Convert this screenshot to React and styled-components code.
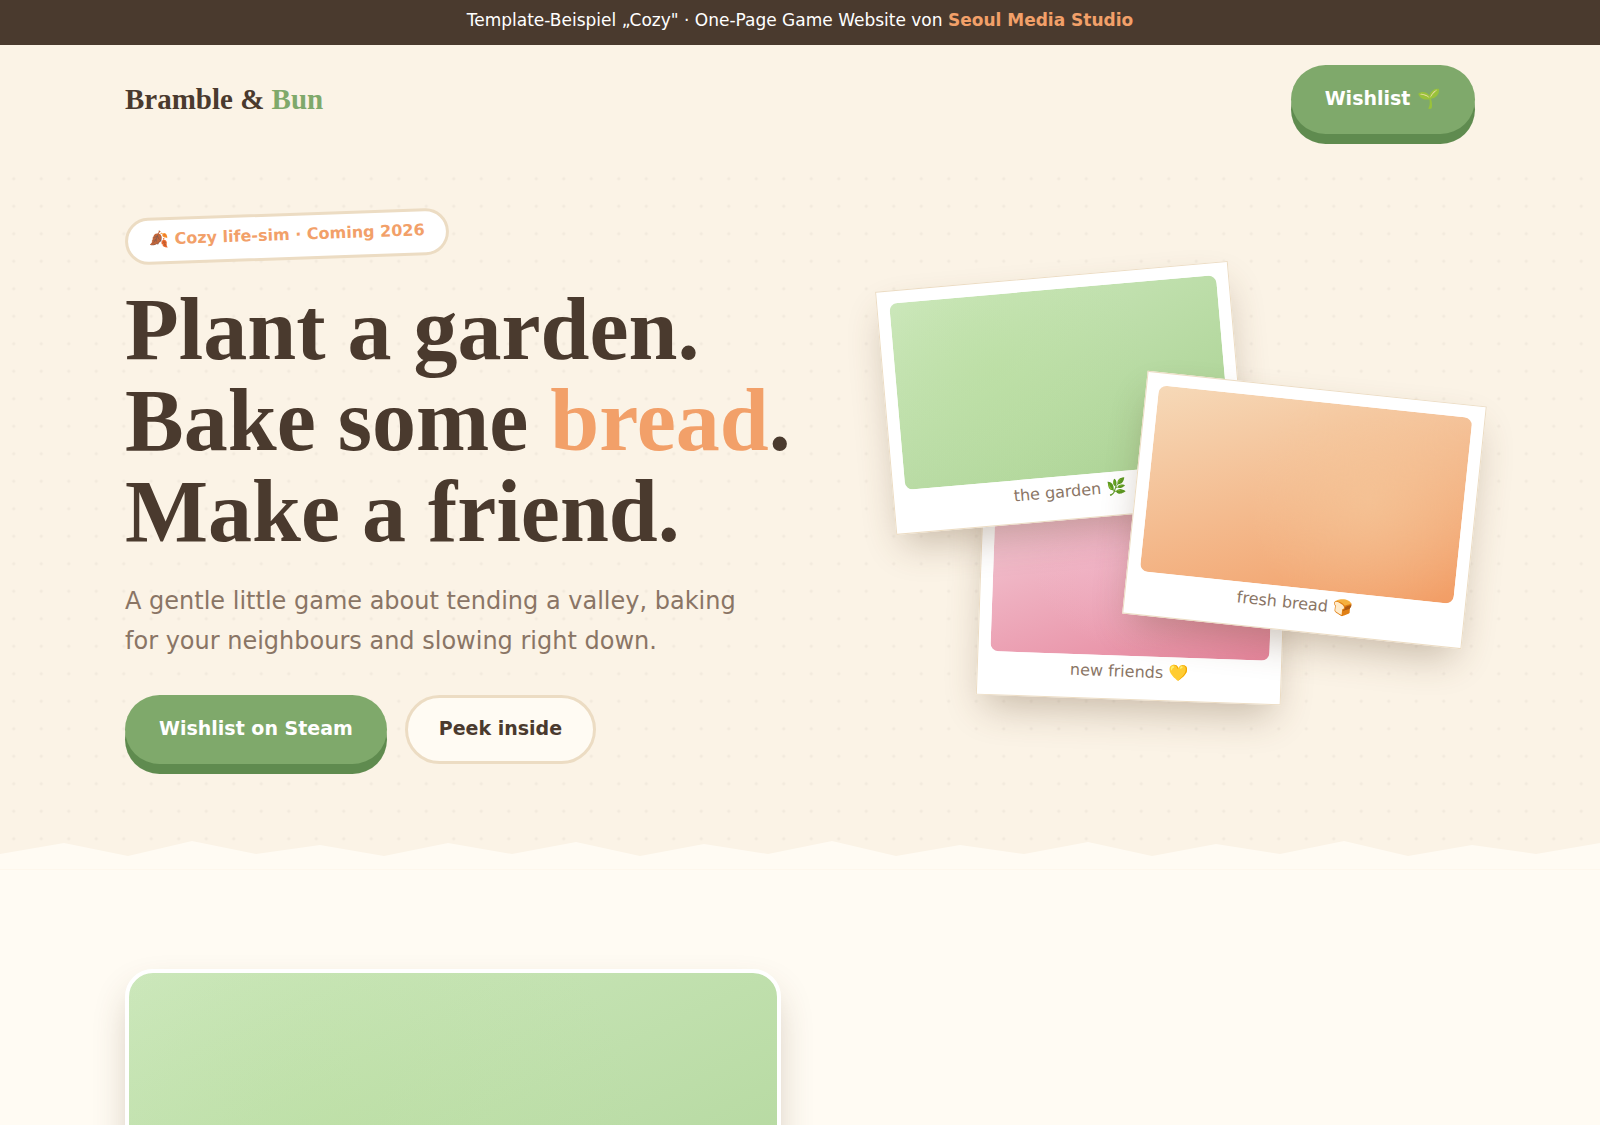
import React from "react";
import styled, { createGlobalStyle } from "styled-components";

const COLORS = {
  ink: "#4a3a2e",
  muted: "#8a7565",
  green: "#7fa96b",
  greenDark: "#5f8b4f",
  orange: "#f2a069",
  sand: "#ecdcc3",
  paper: "#fbf3e6",
  cream: "#fffbf3",
};

const SERIF = `"Liberation Serif", serif`;

const PHOTOS = {
  garden: `radial-gradient(circle at 30% 40%, rgba(184, 222, 155, 0.4), transparent 60%),
    linear-gradient(155deg, #cde8bd, #a9d191)`,
  bread: `radial-gradient(circle at 70% 50%, rgba(245, 200, 155, 0.6), transparent 50%),
    linear-gradient(160deg, #f6d9b8, #f29d65)`,
  friends: `radial-gradient(circle at 50% 40%, rgba(242, 182, 202, 0.6), transparent 60%),
    linear-gradient(160deg, #f6d6e0, #e6859c)`,
};

// heights of the torn paper edge, one point every 4% of the width
const EDGE = [
  13, 2, 15, 0, 13, 4, 15, 2, 13, 1, 15, 3, 13, 0, 15, 4, 13, 1, 15, 3, 13, 0,
  15, 4, 13, 2,
];
const edgePoints = EDGE.map((y, i) => `${i * 4},${y}`).join(" ");

function Polaroid({ photo, caption, ...place }) {
  return (
    <PolaroidCard {...place}>
      <Photo $photo={photo} />
      <Caption>{caption}</Caption>
    </PolaroidCard>
  );
}

export default function App() {
  return (
    <>
      <GlobalStyle />
      <Banner>
        Template-Beispiel „Cozy" · One-Page Game Website von{" "}
        <BannerLink href="#studio">Seoul Media Studio</BannerLink>
      </Banner>
      <Header>
        <HeaderInner>
          <Logo href="#top">
            Bramble & <span>Bun</span>
          </Logo>
          <Button href="#wishlist">Wishlist 🌱</Button>
        </HeaderInner>
      </Header>
      <main>
        <Hero>
          <HeroText>
            <Badge>🍂 Cozy life-sim · Coming 2026</Badge>
            <Title>
              Plant a garden.
              <br />
              Bake some <span>bread</span>.
              <br />
              Make a friend.
            </Title>
            <Lead>
              A gentle little game about tending a valley, baking for your
              neighbours and slowing right down.
            </Lead>
            <Actions>
              <Button href="#wishlist">Wishlist on Steam</Button>
              <Button href="#inside" $ghost>
                Peek inside
              </Button>
            </Actions>
          </HeroText>
          <Polaroids>
            <Polaroid
              photo="garden"
              caption="the garden 🌿"
              $width="58%"
              $left="20px"
              $top="0"
              $angle="-5deg"
              $layer={2}
            />
            <Polaroid
              photo="bread"
              caption="fresh bread 🍞"
              $width="56%"
              $left="44%"
              $top="112px"
              $angle="6deg"
              $layer={3}
            />
            <Polaroid
              photo="friends"
              caption="new friends 💛"
              $width="50%"
              $left="115px"
              $top="180px"
              $angle="2deg"
              $layer={1}
            />
          </Polaroids>
        </Hero>
        <TornEdge viewBox="0 0 100 28" preserveAspectRatio="none" aria-hidden="true">
          <polygon points={`${edgePoints} 100,28 0,28`} />
        </TornEdge>
        <Inside id="inside">
          <Feature>
            <FeatureImage />
          </Feature>
        </Inside>
      </main>
    </>
  );
}

const GlobalStyle = createGlobalStyle`
  * {
    box-sizing: border-box;
  }
  body {
    margin: 0;
    overflow-x: hidden;
    color: ${COLORS.ink};
    font-family: "DejaVu Sans", sans-serif;
    font-size: 20px;
    background-color: ${COLORS.paper};
    background-image: radial-gradient(rgba(74, 58, 46, 0.05) 1px, transparent 2px);
    background-size: 27.5px 27.5px;
  }
`;

const Banner = styled.div`
  padding: 6px 20px 10px;
  background: ${COLORS.ink};
  color: #fff;
  font-size: 17px;
  line-height: 29px;
  text-align: center;
`;

const BannerLink = styled.a`
  color: ${COLORS.orange};
  font-weight: 700;
  text-decoration: none;
`;

const Header = styled.header`
  background: ${COLORS.paper};
`;

const HeaderInner = styled.div`
  display: flex;
  align-items: center;
  justify-content: space-between;
  max-width: 1350px;
  margin: 0 auto;
  padding: 20px 0;
`;

const Logo = styled.a`
  color: ${COLORS.ink};
  font-family: ${SERIF};
  font-size: 29px;
  font-weight: 700;
  text-decoration: none;

  span {
    color: ${COLORS.green};
  }
`;

const Button = styled.a`
  display: inline-block;
  padding: ${(props) => (props.$ghost ? "14px 31px 16px" : "17px 34px 19px")};
  border: ${(props) => (props.$ghost ? `3px solid ${COLORS.sand}` : "0")};
  border-radius: 35px;
  background: ${(props) => (props.$ghost ? COLORS.cream : COLORS.green)};
  box-shadow: ${(props) =>
    props.$ghost ? "none" : `0 10px 0 ${COLORS.greenDark}`};
  color: ${(props) => (props.$ghost ? COLORS.ink : "#fff")};
  font-size: 19px;
  font-weight: 700;
  line-height: 33px;
  text-decoration: none;
`;

const Hero = styled.section`
  display: grid;
  grid-template-columns: 11fr 10fr;
  gap: 70px;
  align-items: center;
  max-width: 1350px;
  margin: 0 auto;
  padding: 59px 0 77px;
`;

const HeroText = styled.div`
  display: flex;
  flex-direction: column;
  align-items: flex-start;
`;

const Badge = styled.span`
  padding: 5px 21px 9px;
  border: 3px solid ${COLORS.sand};
  border-radius: 25px;
  background: #fff;
  color: ${COLORS.orange};
  font-size: 16px;
  font-weight: 700;
  line-height: 27px;
  transform: rotate(-2deg);
`;

const Title = styled.h1`
  margin: 24px 0;
  font-family: ${SERIF};
  font-size: 88px;
  line-height: 91px;

  span {
    color: ${COLORS.orange};
  }
`;

const Lead = styled.p`
  max-width: 625px;
  margin: 0 0 34px;
  color: ${COLORS.muted};
  font-size: 24px;
  line-height: 40px;
`;

const Actions = styled.div`
  display: flex;
  flex-wrap: wrap;
  gap: 18px;
`;

const Polaroids = styled.div`
  position: relative;
  height: 425px;
`;

const PolaroidCard = styled.figure`
  position: absolute;
  top: ${(props) => props.$top};
  left: ${(props) => props.$left};
  z-index: ${(props) => props.$layer};
  width: ${(props) => props.$width};
  margin: 0;
  padding: 12px 12px 14px;
  border: 1px solid ${COLORS.sand};
  background: #fff;
  box-shadow: 0 18px 38px -8px rgba(94, 66, 36, 0.32);
  transform: rotate(${(props) => props.$angle});
`;

const Photo = styled.div`
  height: 187px;
  border-radius: 8px;
  background: ${(props) => PHOTOS[props.$photo]};
`;

const Caption = styled.figcaption`
  padding-top: 2px;
  color: ${COLORS.muted};
  font-size: 16px;
  line-height: 27px;
  text-align: center;
`;

const TornEdge = styled.svg`
  display: block;
  width: 100%;
  height: 28px;
  fill: ${COLORS.cream};
`;

const Inside = styled.section`
  padding: 99px 0;
  border-top: 1px solid #fef7ec;
  background: ${COLORS.cream};
`;

const Feature = styled.div`
  display: grid;
  grid-template-columns: 656px 1fr;
  max-width: 1350px;
  margin: 0 auto;
`;

const FeatureImage = styled.div`
  height: 490px;
  border: 4px solid #fff;
  border-radius: 28px;
  background: ${PHOTOS.garden};
  box-shadow: 0 18px 38px -8px rgba(94, 66, 36, 0.32);
`;
